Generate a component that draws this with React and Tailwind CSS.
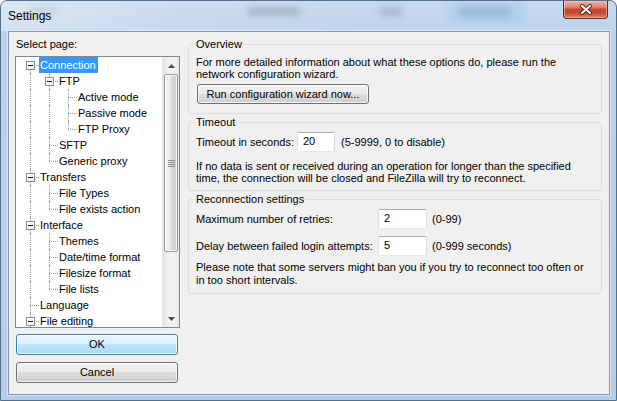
import React from 'react';

const tree = [
  { t: 'Connection', l: 0, exp: true, sel: true },
  { t: 'FTP', l: 1, exp: true },
  { t: 'Active mode', l: 2 },
  { t: 'Passive mode', l: 2 },
  { t: 'FTP Proxy', l: 2, last: true },
  { t: 'SFTP', l: 1 },
  { t: 'Generic proxy', l: 1, last: true },
  { t: 'Transfers', l: 0, exp: true },
  { t: 'File Types', l: 1 },
  { t: 'File exists action', l: 1, last: true },
  { t: 'Interface', l: 0, exp: true },
  { t: 'Themes', l: 1 },
  { t: 'Date/time format', l: 1 },
  { t: 'Filesize format', l: 1 },
  { t: 'File lists', l: 1, last: true },
  { t: 'Language', l: 0 },
  { t: 'File editing', l: 0, exp: true },
];

function GuideCell({ on }) {
  return (
    <div className="relative w-[19px] h-[16px] shrink-0">
      {on && <div className="absolute left-[10px] top-0 h-[16px] border-l border-dotted border-[#999999]" />}
    </div>
  );
}

function ItemCell({ top, bottom, exp }) {
  return (
    <div className="relative w-[19px] h-[16px] shrink-0">
      {top && <div className="absolute left-[10px] top-0 h-[8px] border-l border-dotted border-[#999999]" />}
      {bottom && <div className="absolute left-[10px] top-[8px] h-[8px] border-l border-dotted border-[#999999]" />}
      <div className="absolute left-[10px] top-[8px] w-[9px] border-t border-dotted border-[#999999]" />
      {exp && (
        <div className="absolute left-[6px] top-[4px] w-[9px] h-[9px] border border-[#919191] bg-[linear-gradient(135deg,#ffffff_0%,#ececec_100%)] flex items-center justify-center">
          <div className="w-[5px] h-px bg-[#1e1e1e]" />
        </div>
      )}
    </div>
  );
}

function Tree() {
  const lastAt = [];
  const rows = tree.map((it, i) => {
    const guides = [];
    for (let k = 0; k < it.l; k++) guides.push(!lastAt[k]);
    lastAt[it.l] = !!it.last;
    const top = i !== 0;
    const bottom = !it.last;
    return (
      <div key={it.t} className="flex h-[16px] pl-[4px] shrink-0">
        {guides.map((g, k) => (
          <GuideCell key={k} on={g} />
        ))}
        <ItemCell top={top} bottom={bottom} exp={it.exp} />
        <span
          className={
            'h-[16px] leading-[16px] pl-[1px] pr-[2px] whitespace-nowrap ' +
            (it.sel ? 'bg-[#3399ff] text-white' : 'text-black')
          }
        >
          {it.t}
        </span>
      </div>
    );
  });
  return <div className="flex-1 flex flex-col overflow-hidden">{rows}</div>;
}

function ScrollBar() {
  return (
    <div className="w-[17px] flex flex-col bg-[linear-gradient(90deg,#e3e3e3_0%,#f0f0f0_30%,#f0f0f0_70%,#e8e8e8_100%)] border-l border-[#e6e6e6]">
      <div className="h-[17px] shrink-0 flex items-center justify-center">
        <svg width="7" height="4" viewBox="0 0 7 4">
          <polygon points="3.5,0 7,4 0,4" fill="#4a4a4a" />
        </svg>
      </div>
      <div className="flex-1 flex flex-col">
        <div className="h-[178px] mx-[1px] rounded-[2px] border border-[#9b9b9b] bg-[linear-gradient(90deg,#f4f4f4_0%,#e9e9e9_45%,#d6d6d6_55%,#cfcfcf_100%)] shadow-[inset_0_0_0_1px_rgba(255,255,255,0.7)] flex flex-col items-center justify-center gap-[1px]">
          <div className="w-[7px] h-px bg-[#8c8c8c]" />
          <div className="w-[7px] h-px bg-[#8c8c8c]" />
          <div className="w-[7px] h-px bg-[#8c8c8c]" />
          <div className="w-[7px] h-px bg-[#8c8c8c]" />
        </div>
      </div>
      <div className="h-[17px] shrink-0 flex items-center justify-center">
        <svg width="7" height="4" viewBox="0 0 7 4">
          <polygon points="0,0 7,0 3.5,4" fill="#4a4a4a" />
        </svg>
      </div>
    </div>
  );
}

function WinButton({ children, focused, className = '' }) {
  return (
    <button
      className={
        "flex items-center justify-center rounded-[3px] border font-['Liberation_Sans',Arial,sans-serif] text-[11px] font-normal leading-[13px] text-black shadow-[inset_0_0_0_1px_rgba(255,255,255,0.75)] " +
        (focused
          ? 'border-[#3c7fb1] bg-[linear-gradient(180deg,#eaf6fd_0%,#d9f0fc_50%,#bee6fd_50%,#a7d9f5_100%)] '
          : 'border-[#707070] bg-[linear-gradient(180deg,#f2f2f2_0%,#ebebeb_50%,#dddddd_50%,#cfcfcf_100%)] ') +
        className
      }
    >
      <span>{children}</span>
    </button>
  );
}

function TextBox({ value, className = '' }) {
  return (
    <div
      className={
        'h-[20px] bg-white border border-t-[#abadb3] border-x-[#dbdfe6] border-b-[#e3e9ef] rounded-[2px] pl-[5px] leading-[17px] text-black ' +
        className
      }
    >
      {value}
    </div>
  );
}

function CloseButton() {
  return (
    <div className="mr-[8px] w-[45px] h-[18px] rounded-b-[4px] border border-t-0 border-[#6e2a1e] bg-[linear-gradient(180deg,#eab3a6_0%,#de8a78_35%,#c9452f_50%,#c44a33_70%,#dc866f_100%)] shadow-[inset_0_0_0_1px_rgba(255,220,210,0.45)] flex items-center justify-center">
      <svg width="14" height="11" viewBox="0 0 14 11">
        <path d="M3 2 L11 9 M11 2 L3 9" stroke="#5a1f15" strokeWidth="4" strokeLinecap="round" />
        <path d="M3 2 L11 9 M11 2 L3 9" stroke="#ffffff" strokeWidth="2.2" strokeLinecap="round" />
      </svg>
    </div>
  );
}

export default function App() {
  return (
    <div className="w-[617px] h-[401px] flex flex-col rounded-t-[7px] border border-[#54708f] bg-[linear-gradient(180deg,#c8daee_0%,#bcd2ea_10%,#b7cde6_100%)] overflow-hidden font-['Liberation_Sans',Arial,sans-serif] text-[11px] text-black">
      {/* title bar */}
      <div className="relative h-[30px] shrink-0 flex items-start bg-[linear-gradient(90deg,rgba(255,255,255,0.35)_0%,rgba(255,255,255,0.1)_30%,rgba(255,255,255,0)_60%)]">
        <div className="absolute left-[30px] top-[6px] w-[26px] h-[8px] rounded-full bg-[rgba(95,110,135,0.15)] blur-[3px]" />
        <div className="absolute left-[246px] top-[6px] w-[54px] h-[9px] rounded-full bg-[rgba(95,110,135,0.3)] blur-[3px]" />
        <div className="absolute left-[378px] top-[6px] w-[24px] h-[9px] rounded-full bg-[rgba(95,110,135,0.28)] blur-[3px]" />
        <div className="absolute left-[447px] top-[1px] w-[78px] h-[22px] rounded-[3px] bg-[rgba(170,205,240,0.7)] blur-[2px]" />
        <div className="absolute left-[458px] top-[7px] w-[52px] h-[8px] rounded-full bg-[rgba(95,110,135,0.28)] blur-[3px]" />
        <span className="relative ml-[7px] mt-[8px] text-[12px] leading-[14px] text-black">Settings</span>
        <div className="relative ml-auto">
          <CloseButton />
        </div>
      </div>
      {/* client area */}
      <div className="ml-[7px] mr-[6px] mb-[5px] flex-1 flex bg-[#f0f0f0] border border-[#8399b3] shadow-[0_0_0_1px_rgba(255,255,255,0.45)] pl-[6px] pr-[7px] pt-[6px]">
        {/* left column */}
        <div className="w-[165px] shrink-0 flex flex-col">
          <div className="ml-[1px] leading-[12px] h-[12px]">Select page:</div>
          <div className="mt-[6px] h-[272px] flex border border-[#828790] bg-white">
            <Tree />
            <ScrollBar />
          </div>
          <WinButton focused className="mt-[6px] ml-[1px] w-[162px] h-[21px]">
            OK
          </WinButton>
          <WinButton className="mt-[7px] ml-[1px] w-[162px] h-[21px]">Cancel</WinButton>
        </div>
        {/* right column */}
        <div className="ml-[8px] w-[414px] shrink-0 flex flex-col">
          <fieldset className="border border-[#d5dfe5] rounded-[3px] pl-[7px] pr-[7px] pb-[9px]">
            <legend className="px-[1px] -ml-[1px] leading-[12px]">Overview</legend>
            <p className="mt-[6px] leading-[12px] whitespace-nowrap">
              For more detailed information about what these options do, please run the
              <br />
              network configuration wizard.
            </p>
            <WinButton className="mt-[4px] ml-[1px] w-[172px] h-[20px]">Run configuration wizard now...</WinButton>
          </fieldset>

          <fieldset className="mt-[2px] border border-[#d5dfe5] rounded-[3px] pl-[7px] pr-[7px] pb-[6px]">
            <legend className="px-[1px] -ml-[1px] leading-[12px]">Timeout</legend>
            <div className="mt-[4px] flex items-center h-[20px] whitespace-nowrap">
              <span className="w-[101px] shrink-0">Timeout in seconds:</span>
              <TextBox value="20" className="w-[38px] shrink-0" />
              <span className="ml-[6px]">(5-9999, 0 to disable)</span>
            </div>
            <p className="mt-[8px] leading-[12px] whitespace-nowrap">
              If no data is sent or received during an operation for longer than the specified
              <br />
              time, the connection will be closed and FileZilla will try to reconnect.
            </p>
          </fieldset>

          <fieldset className="mt-[2px] border border-[#d5dfe5] rounded-[3px] pl-[7px] pr-[7px] pb-[6px]">
            <legend className="px-[1px] -ml-[1px] leading-[12px]">Reconnection settings</legend>
            <div className="mt-[4px] flex items-center h-[20px] whitespace-nowrap">
              <span className="w-[182px] shrink-0">Maximum number of retries:</span>
              <TextBox value="2" className="w-[49px] shrink-0" />
              <span className="ml-[5px]">(0-99)</span>
            </div>
            <div className="mt-[7px] flex items-center h-[20px] whitespace-nowrap">
              <span className="w-[182px] shrink-0">Delay between failed login attempts:</span>
              <TextBox value="5" className="w-[49px] shrink-0" />
              <span className="ml-[5px]">(0-999 seconds)</span>
            </div>
            <p className="mt-[5px] leading-[13px] whitespace-nowrap">
              Please note that some servers might ban you if you try to reconnect too often or
              <br />
              in too short intervals.
            </p>
          </fieldset>
        </div>
      </div>
    </div>
  );
}
